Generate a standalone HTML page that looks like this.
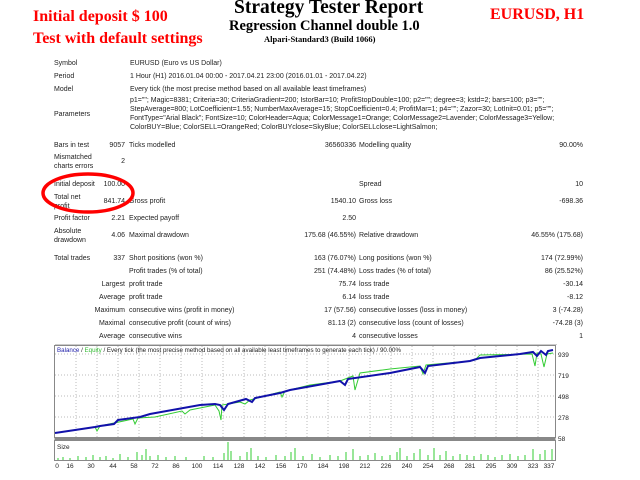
<!DOCTYPE html>
<html><head><meta charset="utf-8"><style>
body{margin:0;width:640px;height:480px;background:#fff;position:relative;overflow:hidden;font-family:"Liberation Sans",sans-serif;}
.a{position:absolute;white-space:nowrap;}
.t{font-size:7px;color:#222;line-height:9px;}
.r{text-align:right;}
.h{font-family:"Liberation Serif",serif;font-weight:bold;}
.red{color:#f00;}
</style></head><body>
<div class="a h" style="left:234px;top:-3px;font-size:19.5px;">Strategy Tester Report</div>
<div class="a h" style="left:229px;top:18px;font-size:14.5px;">Regression Channel double 1.0</div>
<div class="a h" style="left:264px;top:34px;font-size:8.5px;">Alpari-Standard3 (Build 1066)</div>
<div class="a h red" style="left:33px;top:8px;font-size:16px;">Initial deposit $ 100</div>
<div class="a h red" style="left:33px;top:30px;font-size:16px;">Test with default settings</div>
<div class="a h red" style="left:490px;top:6px;font-size:16px;">EURUSD, H1</div>

<div class="a t" style="left:54px;top:59px">Symbol</div>
<div class="a t" style="left:130px;top:59px">EURUSD (Euro vs US Dollar)</div>
<div class="a t" style="left:54px;top:72px">Period</div>
<div class="a t" style="left:130px;top:72px">1 Hour (H1) 2016.01.04 00:00 - 2017.04.21 23:00 (2016.01.01 - 2017.04.22)</div>
<div class="a t" style="left:54px;top:85px">Model</div>
<div class="a t" style="left:130px;top:85px">Every tick (the most precise method based on all available least timeframes)</div>
<div class="a t" style="left:54px;top:110px">Parameters</div>
<div class="a t" style="left:130px;top:96px">p1=""; Magic=8381; Criteria=30; CriteriaGradient=200; IstorBar=10; ProfitStopDouble=100; p2=""; degree=3; kstd=2; bars=100; p3="";</div>
<div class="a t" style="left:130px;top:105px">StepAverage=800; LotCoefficient=1.55; NumberMaxAverage=15; StopCoefficient=0.4; ProfitMar=1; p4=""; Zazor=30; LotInit=0.01; p5="";</div>
<div class="a t" style="left:130px;top:114px">FontType="Arial Black"; FontSize=10; ColorHeader=Aqua; ColorMessage1=Orange; ColorMessage2=Lavender; ColorMessage3=Yellow;</div>
<div class="a t" style="left:130px;top:123px">ColorBUY=Blue; ColorSELL=OrangeRed; ColorBUYclose=SkyBlue; ColorSELLclose=LightSalmon;</div>

<div class="a t" style="left:54px;top:141px">Bars in test</div>
<div class="a t r" style="right:515px;top:141px">9057</div>
<div class="a t" style="left:129px;top:141px">Ticks modelled</div>
<div class="a t r" style="right:284px;top:141px">36560336</div>
<div class="a t" style="left:359px;top:141px">Modelling quality</div>
<div class="a t r" style="right:57px;top:141px">90.00%</div>
<div class="a t" style="left:54px;top:153px">Mismatched<br>charts errors</div>
<div class="a t r" style="right:515px;top:157px">2</div>

<div class="a t" style="left:54px;top:180px">Initial deposit</div>
<div class="a t r" style="right:515px;top:180px">100.00</div>
<div class="a t" style="left:359px;top:180px">Spread</div>
<div class="a t r" style="right:57px;top:180px">10</div>
<div class="a t" style="left:54px;top:193px">Total net<br>profit</div>
<div class="a t r" style="right:515px;top:197px">841.74</div>
<div class="a t" style="left:129px;top:197px">Gross profit</div>
<div class="a t r" style="right:284px;top:197px">1540.10</div>
<div class="a t" style="left:359px;top:197px">Gross loss</div>
<div class="a t r" style="right:57px;top:197px">-698.36</div>
<div class="a t" style="left:54px;top:214px">Profit factor</div>
<div class="a t r" style="right:515px;top:214px">2.21</div>
<div class="a t" style="left:129px;top:214px">Expected payoff</div>
<div class="a t r" style="right:284px;top:214px">2.50</div>
<div class="a t" style="left:54px;top:227px">Absolute<br>drawdown</div>
<div class="a t r" style="right:515px;top:231px">4.06</div>
<div class="a t" style="left:129px;top:231px">Maximal drawdown</div>
<div class="a t r" style="right:284px;top:231px">175.68 (46.55%)</div>
<div class="a t" style="left:359px;top:231px">Relative drawdown</div>
<div class="a t r" style="right:57px;top:231px">46.55% (175.68)</div>

<div class="a t" style="left:54px;top:254px">Total trades</div>
<div class="a t r" style="right:515px;top:254px">337</div>
<div class="a t" style="left:129px;top:254px">Short positions (won %)</div>
<div class="a t r" style="right:284px;top:254px">163 (76.07%)</div>
<div class="a t" style="left:359px;top:254px">Long positions (won %)</div>
<div class="a t r" style="right:57px;top:254px">174 (72.99%)</div>
<div class="a t" style="left:129px;top:267px">Profit trades (% of total)</div>
<div class="a t r" style="right:284px;top:267px">251 (74.48%)</div>
<div class="a t" style="left:359px;top:267px">Loss trades (% of total)</div>
<div class="a t r" style="right:57px;top:267px">86 (25.52%)</div>
<div class="a t r" style="right:515px;top:280px">Largest</div>
<div class="a t" style="left:129px;top:280px">profit trade</div>
<div class="a t r" style="right:284px;top:280px">75.74</div>
<div class="a t" style="left:359px;top:280px">loss trade</div>
<div class="a t r" style="right:57px;top:280px">-30.14</div>
<div class="a t r" style="right:515px;top:293px">Average</div>
<div class="a t" style="left:129px;top:293px">profit trade</div>
<div class="a t r" style="right:284px;top:293px">6.14</div>
<div class="a t" style="left:359px;top:293px">loss trade</div>
<div class="a t r" style="right:57px;top:293px">-8.12</div>
<div class="a t r" style="right:515px;top:306px">Maximum</div>
<div class="a t" style="left:129px;top:306px">consecutive wins (profit in money)</div>
<div class="a t r" style="right:284px;top:306px">17 (57.56)</div>
<div class="a t" style="left:359px;top:306px">consecutive losses (loss in money)</div>
<div class="a t r" style="right:57px;top:306px">3 (-74.28)</div>
<div class="a t r" style="right:515px;top:319px">Maximal</div>
<div class="a t" style="left:129px;top:319px">consecutive profit (count of wins)</div>
<div class="a t r" style="right:284px;top:319px">81.13 (2)</div>
<div class="a t" style="left:359px;top:319px">consecutive loss (count of losses)</div>
<div class="a t r" style="right:57px;top:319px">-74.28 (3)</div>
<div class="a t r" style="right:515px;top:332px">Average</div>
<div class="a t" style="left:129px;top:332px">consecutive wins</div>
<div class="a t r" style="right:284px;top:332px">4</div>
<div class="a t" style="left:359px;top:332px">consecutive losses</div>
<div class="a t r" style="right:57px;top:332px">1</div>
<div class="a" style="left:55px;top:344px;width:502px;height:1px;background:#ccc"></div>

<svg class="a" style="left:0;top:0" width="640" height="480">
<ellipse cx="88" cy="193" rx="45" ry="19" fill="none" stroke="#f00" stroke-width="3.5"/>
<rect x="54.5" y="345.5" width="501" height="92" fill="#fff" stroke="#888"/>
<g stroke="#bbb" stroke-dasharray="1,2" stroke-width="1">
<line x1="55" y1="354" x2="555" y2="354"/><line x1="55" y1="375" x2="555" y2="375"/>
<line x1="55" y1="396" x2="555" y2="396"/><line x1="55" y1="417" x2="555" y2="417"/>
<line x1="76" y1="346" x2="76" y2="437"/><line x1="97" y1="346" x2="97" y2="437"/><line x1="118" y1="346" x2="118" y2="437"/><line x1="139" y1="346" x2="139" y2="437"/><line x1="160" y1="346" x2="160" y2="437"/><line x1="181" y1="346" x2="181" y2="437"/><line x1="202" y1="346" x2="202" y2="437"/><line x1="223" y1="346" x2="223" y2="437"/><line x1="244" y1="346" x2="244" y2="437"/><line x1="265" y1="346" x2="265" y2="437"/><line x1="286" y1="346" x2="286" y2="437"/><line x1="307" y1="346" x2="307" y2="437"/><line x1="328" y1="346" x2="328" y2="437"/><line x1="349" y1="346" x2="349" y2="437"/><line x1="370" y1="346" x2="370" y2="437"/><line x1="391" y1="346" x2="391" y2="437"/><line x1="412" y1="346" x2="412" y2="437"/><line x1="433" y1="346" x2="433" y2="437"/><line x1="454" y1="346" x2="454" y2="437"/><line x1="475" y1="346" x2="475" y2="437"/><line x1="496" y1="346" x2="496" y2="437"/><line x1="517" y1="346" x2="517" y2="437"/><line x1="538" y1="346" x2="538" y2="437"/>
</g>
<polyline fill="none" stroke="#3c3" stroke-width="1" points="55,433 95,427 97,431 100,426 133,419 135,424 138,418 155,417 182,411 185,414 190,410 210,406 215,405 219,411 221,420 222,405 240,402 245,404 250,400 280,392 282,397 285,391 310,385 340,381 353,376 355,390 360,373 390,369 420,366 423,374 426,365 470,361 475,360 480,355 532,354 535,366 537,353 541,354 544,367 547,354 553,353"/>
<polyline fill="none" stroke="#11a" stroke-width="2" points="55,433 95,427 100,426 114,424 118,420 140,417 150,414 200,405 215,404 220,405 224,410 228,404 246,399 252,402 255,398 280,393 290,390 340,381 345,385 348,379 390,373 420,367 425,373 428,366 470,361 480,358 500,356 520,354 533,352 537,356 541,351 546,355 548,351 553,350"/>
<rect x="54.5" y="437" width="501" height="3" fill="#888"/>
<rect x="54.5" y="440.5" width="501" height="20" fill="#fff" stroke="#888"/>
<text x="57" y="449" font-size="6.5" fill="#222" font-family="Liberation Sans">Size</text>
<g stroke="#3c3" stroke-width="1">
<line x1="58" y1="460" x2="58" y2="458"/><line x1="63" y1="460" x2="63" y2="457"/><line x1="70" y1="460" x2="70" y2="458"/><line x1="78" y1="460" x2="78" y2="456"/><line x1="86" y1="460" x2="86" y2="457"/><line x1="93" y1="460" x2="93" y2="455"/><line x1="100" y1="460" x2="100" y2="457"/><line x1="106" y1="460" x2="106" y2="456"/><line x1="113" y1="460" x2="113" y2="458"/><line x1="120" y1="460" x2="120" y2="454"/><line x1="128" y1="460" x2="128" y2="457"/><line x1="137" y1="460" x2="137" y2="452"/><line x1="142" y1="460" x2="142" y2="455"/><line x1="146" y1="460" x2="146" y2="449"/><line x1="150" y1="460" x2="150" y2="456"/><line x1="158" y1="460" x2="158" y2="455"/><line x1="166" y1="460" x2="166" y2="457"/><line x1="175" y1="460" x2="175" y2="456"/><line x1="186" y1="460" x2="186" y2="457"/><line x1="204" y1="460" x2="204" y2="456"/><line x1="213" y1="460" x2="213" y2="457"/><line x1="224" y1="460" x2="224" y2="453"/><line x1="228" y1="460" x2="228" y2="442"/><line x1="231" y1="460" x2="231" y2="451"/><line x1="240" y1="460" x2="240" y2="456"/><line x1="247" y1="460" x2="247" y2="452"/><line x1="251" y1="460" x2="251" y2="448"/><line x1="258" y1="460" x2="258" y2="456"/><line x1="266" y1="460" x2="266" y2="457"/><line x1="276" y1="460" x2="276" y2="455"/><line x1="285" y1="460" x2="285" y2="456"/><line x1="291" y1="460" x2="291" y2="452"/><line x1="295" y1="460" x2="295" y2="448"/><line x1="303" y1="460" x2="303" y2="456"/><line x1="312" y1="460" x2="312" y2="454"/><line x1="320" y1="460" x2="320" y2="457"/><line x1="330" y1="460" x2="330" y2="455"/><line x1="338" y1="460" x2="338" y2="456"/><line x1="346" y1="460" x2="346" y2="452"/><line x1="353" y1="460" x2="353" y2="449"/><line x1="360" y1="460" x2="360" y2="456"/><line x1="368" y1="460" x2="368" y2="455"/><line x1="375" y1="460" x2="375" y2="453"/><line x1="382" y1="460" x2="382" y2="456"/><line x1="390" y1="460" x2="390" y2="455"/><line x1="397" y1="460" x2="397" y2="452"/><line x1="400" y1="460" x2="400" y2="448"/><line x1="407" y1="460" x2="407" y2="456"/><line x1="414" y1="460" x2="414" y2="453"/><line x1="420" y1="460" x2="420" y2="449"/><line x1="428" y1="460" x2="428" y2="455"/><line x1="434" y1="460" x2="434" y2="448"/><line x1="440" y1="460" x2="440" y2="455"/><line x1="446" y1="460" x2="446" y2="451"/><line x1="453" y1="460" x2="453" y2="456"/><line x1="460" y1="460" x2="460" y2="454"/><line x1="467" y1="460" x2="467" y2="455"/><line x1="474" y1="460" x2="474" y2="456"/><line x1="481" y1="460" x2="481" y2="454"/><line x1="488" y1="460" x2="488" y2="455"/><line x1="495" y1="460" x2="495" y2="457"/><line x1="502" y1="460" x2="502" y2="455"/><line x1="510" y1="460" x2="510" y2="454"/><line x1="518" y1="460" x2="518" y2="456"/><line x1="525" y1="460" x2="525" y2="455"/><line x1="533" y1="460" x2="533" y2="449"/><line x1="540" y1="460" x2="540" y2="454"/><line x1="545" y1="460" x2="545" y2="450"/><line x1="552" y1="460" x2="552" y2="449"/>
</g>
<g font-size="6.2" fill="#222" font-family="Liberation Sans">
<text x="57" y="352"><tspan fill="#22a">Balance</tspan> / <tspan fill="#3b3">Equity</tspan> / Every tick (the most precise method based on all available least timeframes to generate each tick) / 90.00%</text>
</g>
<g font-size="6.5" fill="#222" font-family="Liberation Sans">
<text x="558" y="357">939</text><text x="558" y="378">719</text><text x="558" y="399">498</text><text x="558" y="420">278</text><text x="558" y="441">58</text>
</g>
<g font-size="6.5" fill="#222" font-family="Liberation Sans" text-anchor="middle">
<text x="57" y="468">0</text><text x="70" y="468">16</text><text x="91" y="468">30</text><text x="113" y="468">44</text><text x="134" y="468">58</text><text x="155" y="468">72</text><text x="176" y="468">86</text><text x="197" y="468">100</text><text x="218" y="468">114</text><text x="239" y="468">128</text><text x="260" y="468">142</text><text x="281" y="468">156</text><text x="302" y="468">170</text><text x="323" y="468">184</text><text x="344" y="468">198</text><text x="365" y="468">212</text><text x="386" y="468">226</text><text x="407" y="468">240</text><text x="428" y="468">254</text><text x="449" y="468">268</text><text x="470" y="468">281</text><text x="491" y="468">295</text><text x="512" y="468">309</text><text x="533" y="468">323</text><text x="549" y="468">337</text>
</g>
</svg>
</body></html>
